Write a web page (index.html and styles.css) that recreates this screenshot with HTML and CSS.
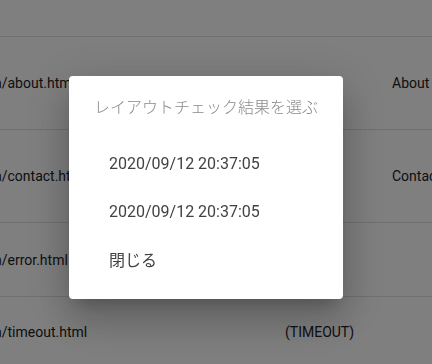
FILE: index.html
```html
<!DOCTYPE html>
<html lang="ja">
<head>
    <meta charset="UTF-8">
    <meta name="viewport" content="width=device-width, initial-scale=1.0">
    <title>レイアウトチェック</title>
    <link rel="stylesheet" href="styles.css">
</head>
<body>

    <!-- Result table -->
    <div class="results">
        <div class="row row-top"></div>
        <div class="row">
            <span class="url">n/about.html</span>
            <span class="status"></span>
            <span class="title">About</span>
        </div>
        <div class="row">
            <span class="url">n/contact.html</span>
            <span class="status"></span>
            <span class="title">Contact</span>
        </div>
        <div class="row row-short">
            <span class="url">n/error.html</span>
            <span class="status"></span>
            <span class="title"></span>
        </div>
        <div class="row row-short row-last">
            <span class="url">n/timeout.html</span>
            <span class="status">(TIMEOUT)</span>
            <span class="title"></span>
        </div>
    </div>

    <!-- Dialog -->
    <div class="overlay">
        <div class="dialog">
            <div class="dialog-title">レイアウトチェック結果を選ぶ</div>
            <div class="dialog-list">
                <div class="dialog-item">2020/09/12 20:37:05</div>
                <div class="dialog-item">2020/09/12 20:37:05</div>
                <div class="dialog-item">閉じる</div>
            </div>
        </div>
    </div>

</body>
</html>
```

FILE: styles.css
```css
/* General Styles */
body {
    font-family: Roboto, "Noto Sans CJK JP", sans-serif;
    margin: 0;
    padding: 0;
    background: #ffffff;
    color: #212121;
    overflow: hidden;
}

/* Result table */
.results {
    display: flex;
    flex-direction: column;
}

.row {
    display: grid;
    grid-template-columns: 285px 107px 1fr;
    align-items: center;
    height: 92px;
    border-bottom: 1px solid #e0e0e0;
    font-size: 14px;
    white-space: nowrap;
}

.row-top {
    height: 36px;
}

.row-short {
    height: 73px;
}

.row-last {
    height: 70px;
    border-bottom: none;
}

.url {
    margin-left: -6px;
}

.title {
    overflow: hidden;
}

/* Dialog */
.overlay {
    position: fixed;
    top: 0;
    left: 0;
    right: 0;
    bottom: 0;
    background: rgba(0, 0, 0, 0.5);
    display: flex;
    align-items: flex-start;
    padding: 76px 0 0 69px;
}

.dialog {
    width: 274px;
    height: 223px;
    box-sizing: border-box;
    background: #ffffff;
    border-radius: 4px;
    box-shadow: 0 11px 15px -7px rgba(0, 0, 0, 0.2), 0 24px 38px 3px rgba(0, 0, 0, 0.14), 0 9px 46px 8px rgba(0, 0, 0, 0.12);
    padding: 20px 0 16px;
}

.dialog-title {
    padding: 0 25px;
    font-size: 16px;
    line-height: 24px;
    color: #8a8a8a;
    font-weight: 300;
}

.dialog-list {
    margin-top: 19px;
    display: flex;
    flex-direction: column;
}

.dialog-item {
    height: 48px;
    display: flex;
    align-items: center;
    padding: 0 40px;
    font-size: 16px;
    color: #424242;
}
```
